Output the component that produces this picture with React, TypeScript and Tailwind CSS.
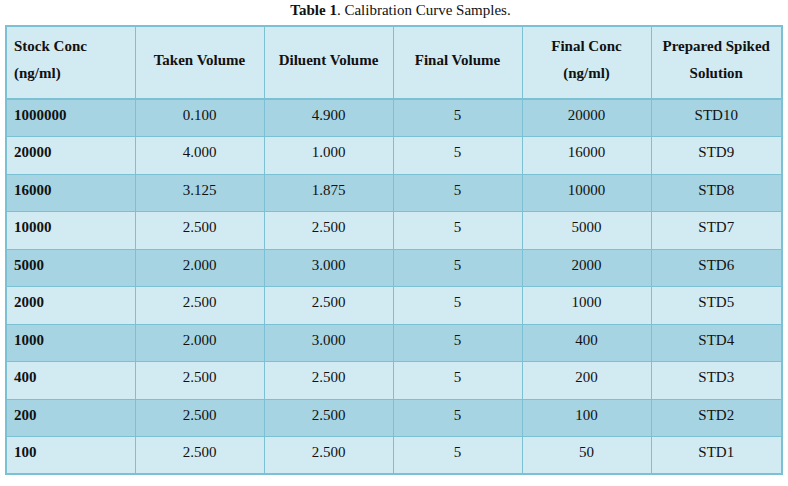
const headers: [string, string?][] = [
  ["Stock Conc", "(ng/ml)"],
  ["Taken Volume"],
  ["Diluent Volume"],
  ["Final Volume"],
  ["Final Conc", "(ng/ml)"],
  ["Prepared Spiked", "Solution"],
];

const rows = [
  ["1000000", "0.100", "4.900", "5", "20000", "STD10"],
  ["20000", "4.000", "1.000", "5", "16000", "STD9"],
  ["16000", "3.125", "1.875", "5", "10000", "STD8"],
  ["10000", "2.500", "2.500", "5", "5000", "STD7"],
  ["5000", "2.000", "3.000", "5", "2000", "STD6"],
  ["2000", "2.500", "2.500", "5", "1000", "STD5"],
  ["1000", "2.000", "3.000", "5", "400", "STD4"],
  ["400", "2.500", "2.500", "5", "200", "STD3"],
  ["200", "2.500", "2.500", "5", "100", "STD2"],
  ["100", "2.500", "2.500", "5", "50", "STD1"],
];

export default function App() {
  return (
    <div className="w-[788px] h-[486px] bg-white [font-family:'Liberation_Serif','Times_New_Roman',serif] text-[#111]">
      <div className="pl-[5px] w-[781px]">
        <p className="text-center text-[15px] leading-[18px] h-[25px] pt-[1px] pl-[15px]">
          <b>Table 1</b>. Calibration Curve Samples.
        </p>
        <table className="w-[776px] table-fixed border-collapse border-2 border-[#7cc0d4] text-[15px]">
          <colgroup>
            <col className="w-[129px]" />
            <col className="w-[129px]" />
            <col className="w-[129px]" />
            <col className="w-[129px]" />
            <col className="w-[129px]" />
            <col className="w-[131px]" />
          </colgroup>
          <thead>
            <tr className="h-[73px] bg-[#d2eaf2] border-b-2 border-[#7cc0d4]">
              {headers.map((h, i) => (
                <th
                  key={i}
                  className={`border-x border-[#7cc0d4] font-bold leading-[27px] pb-[5px] ${
                    i === 0 ? "text-left pl-[7px]" : "text-center"
                  }`}
                >
                  {h[0]}
                  {h[1] && (
                    <>
                      <br />
                      {h[1]}
                    </>
                  )}
                </th>
              ))}
            </tr>
          </thead>
          <tbody>
            {rows.map((r, ri) => (
              <tr
                key={ri}
                className={`h-[37.5px] border-t border-[#7cc0d4] ${
                  ri % 2 === 0 ? "bg-[#a6d4e2]" : "bg-[#d2eaf2]"
                }`}
              >
                {r.map((c, ci) => (
                  <td
                    key={ci}
                    className={`border-x border-[#7cc0d4] pb-[6px] ${
                      ci === 0 ? "text-left pl-[7px] font-bold" : "text-center"
                    }`}
                  >
                    {c}
                  </td>
                ))}
              </tr>
            ))}
          </tbody>
        </table>
      </div>
    </div>
  );
}
